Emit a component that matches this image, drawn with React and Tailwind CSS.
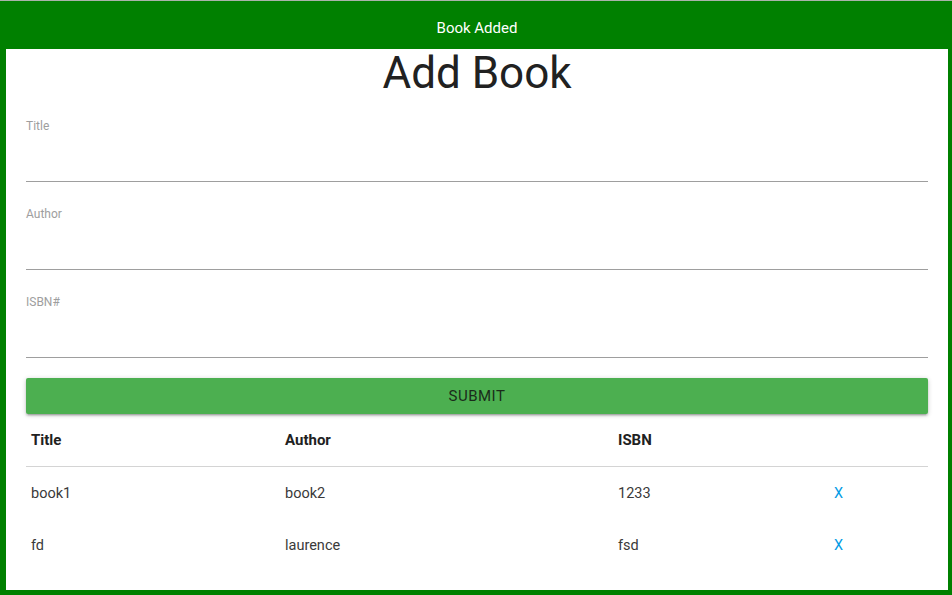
const books = [
  { title: "book1", author: "book2", isbn: "1233" },
  { title: "fd", author: "laurence", isbn: "fsd" },
];

const Field = ({ label, first }) => (
  <div className={first ? "mt-[21px]" : "mt-[24px]"}>
    <label className="block text-[12px] leading-[16px] text-[#9e9e9e]">{label}</label>
    <div className="h-[48px] border-b border-[#9e9e9e]"></div>
  </div>
);

const App = () => {
  return (
    <div className="w-[952px] h-[595px] bg-[#008000] border-t border-[#a9b3a9] pl-[6px] pr-[4px] pb-[5px] flex flex-col font-['Roboto',sans-serif]">
      <div className="h-[48px] pt-[6px] flex items-center justify-center text-[15px] text-white">
        Book Added
      </div>
      <div className="flex-1 bg-white px-[20px]">
        <h3 className="h-[48px] leading-[48px] text-[44px] text-center text-[#212121]">Add Book</h3>
        <Field label="Title" first />
        <Field label="Author" />
        <Field label="ISBN#" />
        <button className="mt-[20px] w-full h-[36px] rounded-[2px] bg-[#4caf50] text-[15px] tracking-[0.5px] text-[#1a2b1a] shadow-[0_2px_2px_0_rgba(0,0,0,0.14),0_3px_1px_-2px_rgba(0,0,0,0.12),0_1px_5px_0_rgba(0,0,0,0.2)]">
          SUBMIT
        </button>
        <div className="grid grid-cols-[254px_333px_216px_1fr] h-[53px] items-center border-b border-[#d4d4d4] text-[15px] font-bold text-[#212121]">
          <div className="px-[5px]">Title</div>
          <div className="px-[5px]">Author</div>
          <div className="px-[5px]">ISBN</div>
          <div></div>
        </div>
        {books.map((b) => (
          <div key={b.title} className="grid grid-cols-[254px_333px_216px_1fr] h-[52px] pt-[2px] items-center text-[14.5px] text-[#3a3a3a]">
            <div className="px-[5px]">{b.title}</div>
            <div className="px-[5px]">{b.author}</div>
            <div className="px-[5px]">{b.isbn}</div>
            <div className="px-[5px]">
              <a href="#" className="text-[#039be5]">X</a>
            </div>
          </div>
        ))}
      </div>
    </div>
  );
};

export default App;
